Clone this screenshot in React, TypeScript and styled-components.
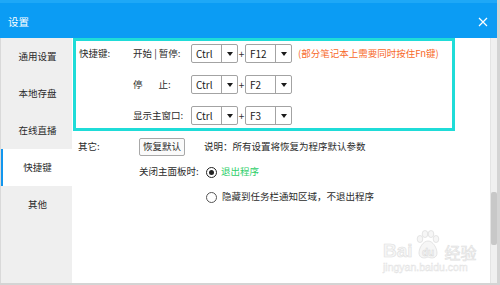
import React from 'react';
import styled, { createGlobalStyle } from 'styled-components';

const Global = createGlobalStyle`
  html, body { margin: 0; padding: 0; }
  body {
    width: 500px; height: 285px; overflow: hidden;
    background: #d4d4d4;
    font-family: "Noto Sans CJK SC", "Microsoft YaHei", sans-serif;
    color: #2b2b2b;
  }
`;

const Window = styled.div`
  width: 497px;
  height: 283px;
  display: flex;
  flex-direction: column;
  background: #fff;
`;

const TitleBar = styled.div`
  height: 38px;
  flex: none;
  box-sizing: border-box;
  background: #0b9cf4;
  border-top: 3px solid #1ea8f7;
  padding: 3px 8px 0 8px;
  display: flex;
  align-items: center;
  justify-content: space-between;
  color: #fff;
  font-size: 10.5px;
  line-height: 1;
`;

const Close = styled.svg`
  width: 10px;
  height: 10px;
  margin-right: 1px;
`;

const Body = styled.div`
  flex: 1;
  display: flex;
  min-height: 0;
`;

const Sidebar = styled.div`
  width: 72px;
  flex: none;
  box-sizing: border-box;
  background: #efefef;
  border-left: 1px solid #d9d9d9;
  display: flex;
  flex-direction: column;
`;

const NavItem = styled.div<{ $active?: boolean }>`
  height: 37px;
  display: flex;
  align-items: center;
  justify-content: center;
  font-size: 9.5px;
  line-height: 1;
  color: #2b2b2b;
  background: ${p => (p.$active ? '#fff' : 'transparent')};
  border-left: 2px solid ${p => (p.$active ? '#1296ee' : 'transparent')};
`;

const Main = styled.div`
  flex: 1;
  position: relative;
  display: flex;
  flex-direction: column;
  font-size: 9.5px;
  line-height: 1;
`;

const HotkeyBox = styled.div`
  margin-left: 1px;
  width: 382px;
  height: 93px;
  box-sizing: border-box;
  border: 3px solid #1fdcd8;
  padding: 3px 0 0 3px;
  display: grid;
  grid-template-columns: 54px auto;
`;

const SectionLabel = styled.div`
  height: 19px;
  display: flex;
  align-items: center;
  white-space: nowrap;
`;

const Rows = styled.div`
  display: flex;
  flex-direction: column;
  gap: 12px;
`;

const KeyRow = styled.div`
  height: 19px;
  display: flex;
  align-items: center;
  white-space: nowrap;
`;

const KeyLabel = styled.div`
  width: 58px;
  display: flex;
  align-items: center;
`;

const Gap = styled.span<{ $w: number }>`
  display: inline-block;
  width: ${p => p.$w}px;
`;

const Select = styled.div`
  width: 47px;
  height: 19px;
  box-sizing: border-box;
  border: 1px solid #a3a3a3;
  border-radius: 2px;
  display: flex;
  background: #fff;
`;

const SelectValue = styled.div`
  flex: 1;
  padding-left: 4px;
  display: flex;
  align-items: center;
  font-size: 10px;
  color: #222;
`;

const SelectArrow = styled.div`
  width: 15px;
  border-left: 1px solid #a3a3a3;
  display: flex;
  align-items: center;
  justify-content: center;
  &::after {
    content: '';
    border-left: 3.5px solid transparent;
    border-right: 3.5px solid transparent;
    border-top: 4px solid #1a1a1a;
  }
`;

const Plus = styled.span`
  width: 7px;
  text-align: center;
  font-size: 10px;
  color: #333;
`;

const Note = styled.span`
  margin-left: 6px;
  color: #f7692b;
`;

const Options = styled.div`
  padding: 7px 0 0 6px;
  display: grid;
  grid-template-columns: 61px auto;
  row-gap: 7px;
`;

const OptLabel = styled.div`
  height: 18px;
  display: flex;
  align-items: center;
`;

const OptRow = styled.div`
  height: 18px;
  display: flex;
  align-items: center;
  white-space: nowrap;
`;

const Button = styled.div`
  width: 46px;
  height: 18px;
  box-sizing: border-box;
  border: 1px solid #a8a8a8;
  border-radius: 2px;
  background: #fafafa;
  display: flex;
  align-items: center;
  justify-content: center;
`;

const Hint = styled.span`
  margin-left: 19px;
`;

const RadioLead = styled.span`
  width: 67px;
  flex: none;
`;

const Radio = styled.span<{ $checked?: boolean }>`
  width: 11px;
  height: 11px;
  box-sizing: border-box;
  border-radius: 50%;
  border: 1.3px solid ${p => (p.$checked ? '#222' : '#555')};
  background: #fff;
  display: flex;
  align-items: center;
  justify-content: center;
  flex: none;
  &::after {
    content: '';
    display: ${p => (p.$checked ? 'block' : 'none')};
    width: 5px;
    height: 5px;
    border-radius: 50%;
    background: #222;
  }
`;

const RadioText = styled.span<{ $green?: boolean }>`
  margin-left: ${p => (p.$green ? 4 : 5)}px;
  color: ${p => (p.$green ? '#2fcf6a' : 'inherit')};
`;

const Scrollbar = styled.div`
  width: 7px;
  flex: none;
  background: #f0f0f0;
  border-left: 1px solid #e4e4e4;
  box-sizing: border-box;
  position: relative;
`;

const Thumb = styled.div`
  position: absolute;
  left: 0;
  right: 0;
  top: 154px;
  height: 53px;
  background: #c8c8c8;
  border-radius: 2px;
`;

const Watermark = styled.div`
  position: absolute;
  left: 311px;
  top: 188px;
  pointer-events: none;
  display: flex;
  flex-direction: column;
  color: #f6f6f6;
  -webkit-text-stroke: 0.6px #e0e0e0;
  font-family: "Liberation Sans", Arial, sans-serif;
`;

const WmTop = styled.div`
  display: flex;
  align-items: flex-end;
  font-size: 19px;
  font-weight: bold;
  line-height: 1;
  height: 34px;
`;

const Paw = styled.div`
  display: flex;
  flex-direction: column;
  align-items: center;
  margin: 0 2px;
`;

const WmCn = styled.span`
  font-family: "Noto Sans CJK SC", sans-serif;
  font-weight: normal;
  font-size: 16px;
  margin-left: 2px;
`;

const WmUrl = styled.div`
  font-size: 10.5px;
  margin-top: 2px;
  -webkit-text-stroke: 0.4px #e2e2e2;
`;

export default function App() {
  return (
    <>
      <Global />
      <Window>
        <TitleBar>
          <span>设置</span>
          <Close viewBox="0 0 10 10">
            <path d="M1 1 L9 9 M9 1 L1 9" stroke="#fff" strokeWidth="1.2" fill="none" />
          </Close>
        </TitleBar>
        <Body>
          <Sidebar>
            <NavItem>通用设置</NavItem>
            <NavItem>本地存盘</NavItem>
            <NavItem>在线直播</NavItem>
            <NavItem $active>快捷键</NavItem>
            <NavItem>其他</NavItem>
          </Sidebar>
          <Main>
            <HotkeyBox>
              <SectionLabel>快捷键:</SectionLabel>
              <Rows>
                <KeyRow>
                  <KeyLabel>开始 | 暂停:</KeyLabel>
                  <Select><SelectValue>Ctrl</SelectValue><SelectArrow /></Select>
                  <Plus>+</Plus>
                  <Select><SelectValue>F12</SelectValue><SelectArrow /></Select>
                  <Note>(部分笔记本上需要同时按住Fn键)</Note>
                </KeyRow>
                <KeyRow>
                  <KeyLabel>停<Gap $w={16} />止:</KeyLabel>
                  <Select><SelectValue>Ctrl</SelectValue><SelectArrow /></Select>
                  <Plus>+</Plus>
                  <Select><SelectValue>F2</SelectValue><SelectArrow /></Select>
                </KeyRow>
                <KeyRow>
                  <KeyLabel>显示主窗口:</KeyLabel>
                  <Select><SelectValue>Ctrl</SelectValue><SelectArrow /></Select>
                  <Plus>+</Plus>
                  <Select><SelectValue>F3</SelectValue><SelectArrow /></Select>
                </KeyRow>
              </Rows>
            </HotkeyBox>
            <Options>
              <OptLabel>其它:</OptLabel>
              <OptRow>
                <Button>恢复默认</Button>
                <Hint>说明：所有设置将恢复为程序默认参数</Hint>
              </OptRow>
              <span />
              <OptRow>
                <RadioLead>关闭主面板时:</RadioLead>
                <Radio $checked />
                <RadioText $green>退出程序</RadioText>
              </OptRow>
              <span />
              <OptRow>
                <RadioLead />
                <Radio />
                <RadioText>隐藏到任务栏通知区域，不退出程序</RadioText>
              </OptRow>
            </Options>
            <Watermark>
              <WmTop>
                <span>Bai</span>
                <Paw>
                  <svg width="26" height="30" viewBox="0 0 26 30">
                    <g fill="#f6f6f6" stroke="#dedede" strokeWidth="0.8">
                      <ellipse cx="5" cy="9" rx="2.8" ry="3.5" />
                      <ellipse cx="10" cy="4" rx="2.8" ry="3.5" />
                      <ellipse cx="16" cy="4" rx="2.8" ry="3.5" />
                      <ellipse cx="21" cy="9" rx="2.8" ry="3.5" />
                      <path d="M13 11 C8 11 4 18 4 23 C4 28 9 29 13 27 C17 29 22 28 22 23 C22 18 18 11 13 11 Z" />
                    </g>
                    <text x="13" y="26" textAnchor="middle" fontSize="10" fontFamily="Liberation Sans, Arial, sans-serif" fontWeight="bold" fill="#f6f6f6" stroke="#d8d8d8" strokeWidth="0.5">du</text>
                  </svg>
                </Paw>
                <WmCn>经验</WmCn>
              </WmTop>
              <WmUrl>jingyan.baidu.com</WmUrl>
            </Watermark>
          </Main>
          <Scrollbar>
            <Thumb />
          </Scrollbar>
        </Body>
      </Window>
    </>
  );
}
